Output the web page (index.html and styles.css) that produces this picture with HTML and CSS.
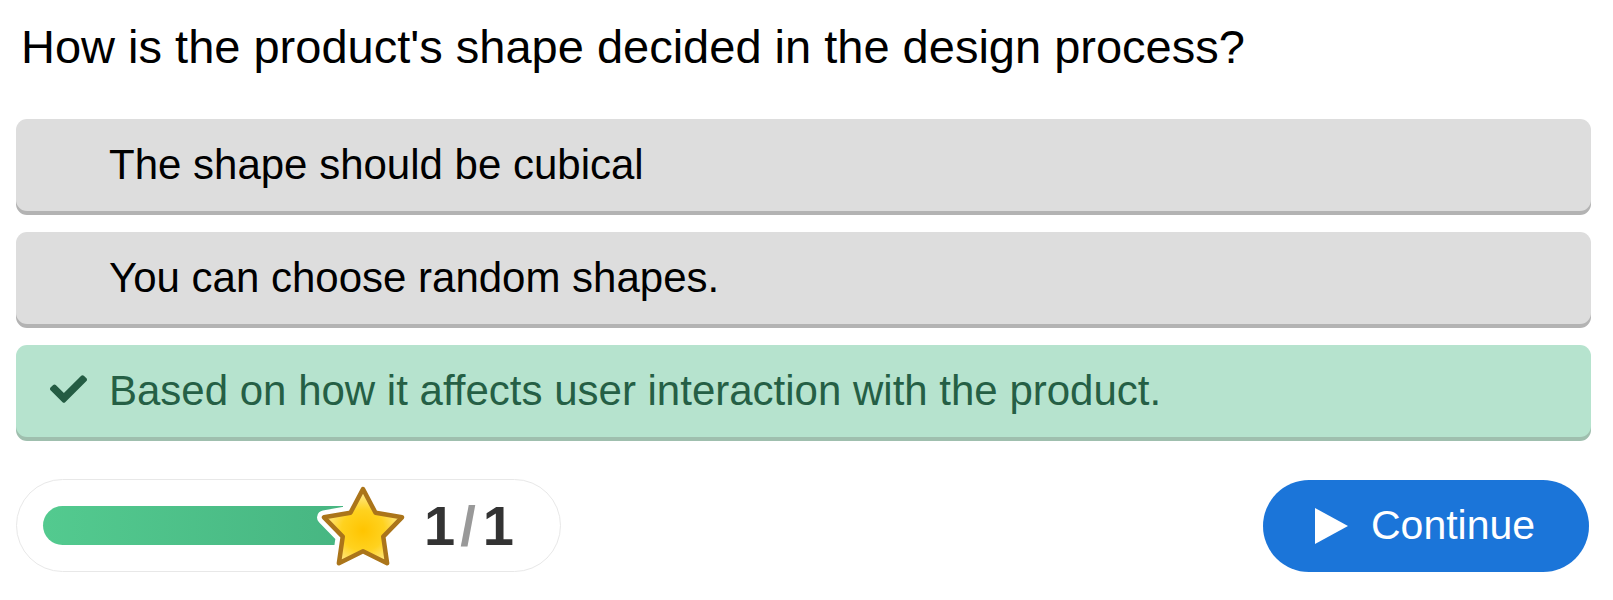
FILE: index.html
```html
<!DOCTYPE html>
<html lang="en">
<head>
<meta charset="utf-8">
<title>Quiz</title>
<link rel="stylesheet" href="styles.css">
</head>
<body>
<div class="quiz">
  <h1 class="question">How is the product's shape decided in the design process?</h1>
  <div class="options">
    <div class="option">
      <span class="icon-slot"></span>
      <span class="option-text">The shape should be cubical</span>
    </div>
    <div class="option">
      <span class="icon-slot"></span>
      <span class="option-text">You can choose random shapes.</span>
    </div>
    <div class="option option-correct">
      <span class="icon-slot">
        <svg class="check" width="37" height="28" viewBox="0 64 512 384" aria-hidden="true"><path fill="currentColor" d="M173.898 439.404l-166.4-166.4c-9.997-9.997-9.997-26.206 0-36.204l36.203-36.204c9.997-9.998 26.207-9.998 36.204 0L192 312.69 432.095 72.596c9.997-9.997 26.207-9.997 36.204 0l36.203 36.204c9.997 9.997 9.997 26.206 0 36.204l-294.4 294.401c-9.998 9.997-26.207 9.997-36.204-.001z"/></svg>
      </span>
      <span class="option-text">Based on how it affects user interaction with the product.</span>
    </div>
  </div>
  <div class="footer">
    <div class="progress">
      <div class="bar"></div>
      <svg class="star" width="92" height="92" viewBox="0 0 92 92" aria-hidden="true">
        <defs>
          <radialGradient id="sg" cx="50%" cy="56%" r="50%">
            <stop offset="0" stop-color="#ffc400"/>
            <stop offset="0.55" stop-color="#ffd21f"/>
            <stop offset="1" stop-color="#ffe98a"/>
          </radialGradient>
        </defs>
        <polygon points="46,9 58.52,32.77 85,37.33 66.26,56.58 70.1,83.17 46,71.3 21.9,83.17 25.74,56.58 7,37.33 33.48,32.77" fill="#ffffff" stroke="#ffffff" stroke-width="14" stroke-linejoin="round"/>
        <polygon points="46,9 58.52,32.77 85,37.33 66.26,56.58 70.1,83.17 46,71.3 21.9,83.17 25.74,56.58 7,37.33 33.48,32.77" fill="url(#sg)" stroke="#ab751a" stroke-width="4.5" stroke-linejoin="round"/>
      </svg>
      <div class="count"><span class="num">1</span><span class="slash">/</span><span class="num">1</span></div>
    </div>
    <button class="continue" type="button">
      <svg class="play" width="33" height="36" viewBox="0 0 33 36" aria-hidden="true"><polygon points="0,0 33,18 0,36" fill="#ffffff"/></svg>
      <span>Continue</span>
    </button>
  </div>
</div>
</body>
</html>
```
FILE: styles.css
```css
* {
  box-sizing: border-box;
}

html, body {
  margin: 0;
  padding: 0;
  background: #ffffff;
}

body {
  font-family: "Liberation Sans", Arial, sans-serif;
  color: #000000;
}

.quiz {
  padding: 20px 22px 0 16px;
}

.question {
  margin: 0 0 45px 5px;
  font-size: 47px;
  line-height: 54px;
  font-weight: normal;
  color: #000000;
}

.options {
  display: flex;
  flex-direction: column;
  gap: 21px;
}

.option {
  display: flex;
  align-items: center;
  height: 92px;
  padding-left: 34px;
  background: #dddddd;
  border-radius: 11px;
  box-shadow: 0 4px 0 #b3b3b3;
  font-size: 42px;
  color: #000000;
}

.icon-slot {
  width: 37px;
  margin-right: 22px;
  flex: none;
  display: flex;
  align-items: center;
  margin-bottom: 5px;
}

.option-correct {
  background: #b6e3ce;
  box-shadow: 0 4px 0 #9fbfae;
  color: #255f45;
}

.check {
  display: block;
  color: #245c43;
}

.footer {
  display: flex;
  justify-content: space-between;
  align-items: center;
  margin-top: 42px;
  padding-right: 2px;
}

.progress {
  display: flex;
  align-items: center;
  width: 545px;
  height: 93px;
  padding-left: 26px;
  border: 1px solid #e8e8e8;
  border-radius: 47px;
  background: #ffffff;
}

.bar {
  width: 300px;
  height: 39px;
  border-radius: 20px 0 0 20px;
  background: linear-gradient(to right, #53ca8f, #47b682);
  flex: none;
}

.star {
  display: block;
  flex: none;
  margin-left: -26px;
}

.count {
  margin-left: 15px;
  font-size: 56px;
  font-weight: bold;
  color: #333333;
  line-height: 1;
  display: flex;
}

.slash {
  color: #999999;
  margin: 0 7px 0 5px;
}

.continue {
  display: flex;
  align-items: center;
  gap: 23px;
  height: 92px;
  width: 326px;
  padding: 0 0 0 52px;
  border: none;
  border-radius: 46px;
  background: #1b75d9;
  color: #ffffff;
  font-family: "Liberation Sans", Arial, sans-serif;
  font-size: 41px;
}

.play {
  display: block;
  flex: none;
}
```
